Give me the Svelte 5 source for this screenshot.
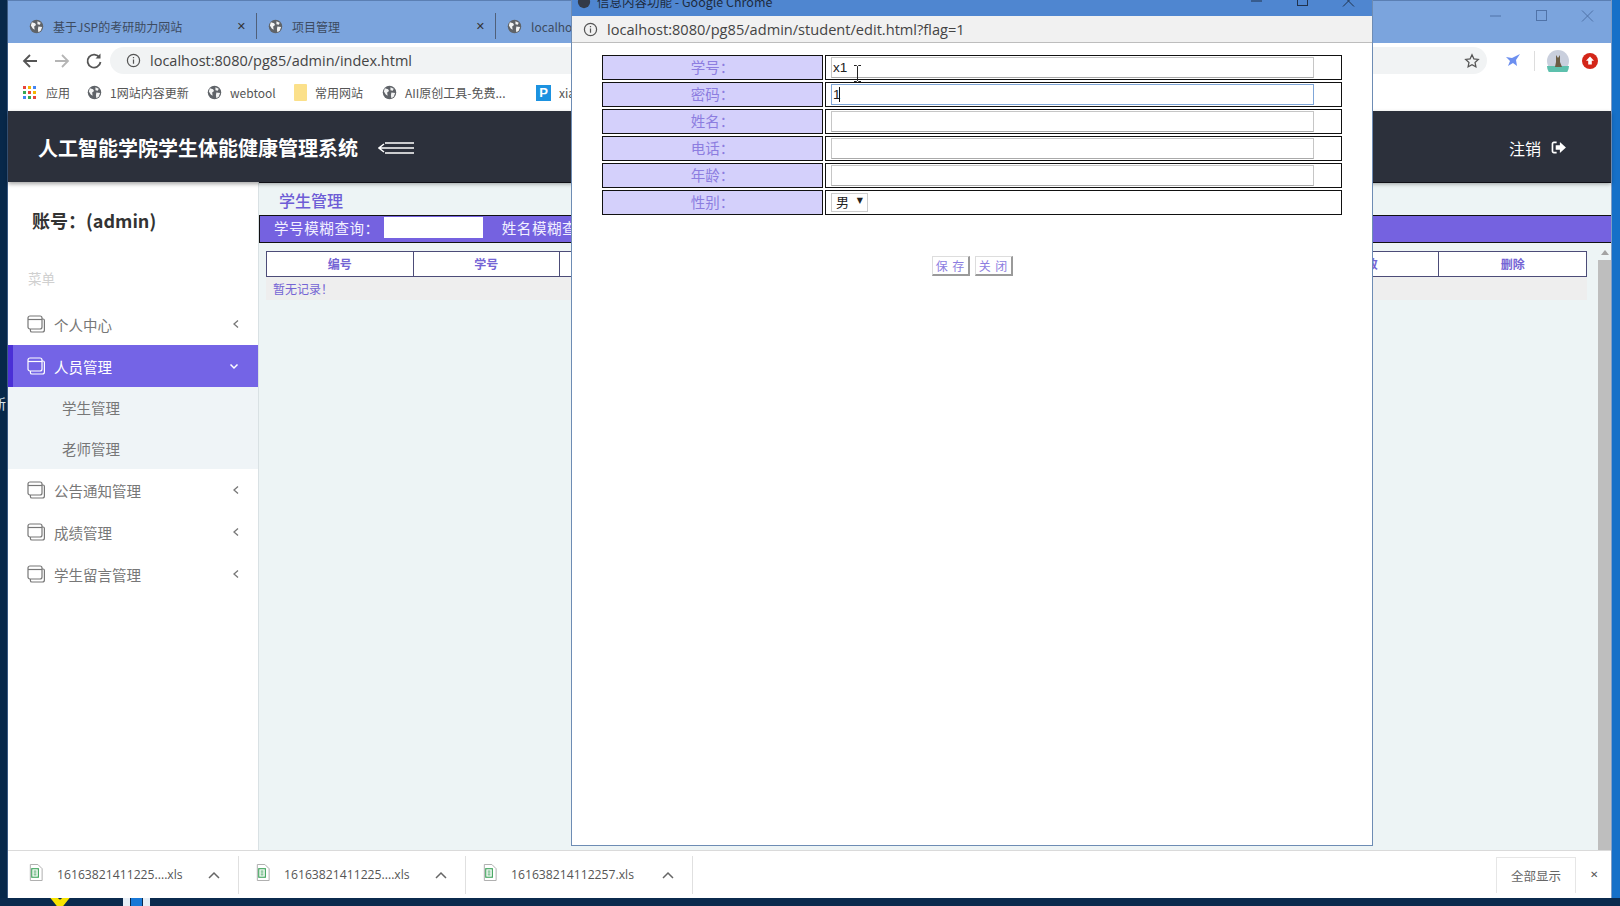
<script>
  const tabs = [
    { title: '基于JSP的考研助力网站', w: 228 },
    { title: '项目管理', w: 228 },
    { title: 'localhost', w: 120 }
  ];
  const marks = [
    { t: '1网站内容更新', k: 'globe', w: 120 },
    { t: 'webtool', k: 'globe', w: 87 },
    { t: '常用网站', k: 'folder', w: 88 },
    { t: 'AII原创工具-免费...', k: 'globe', w: 154 },
    { t: 'xiaohu', k: 'p', w: 60 }
  ];
  const menus = [
    { t: '个人中心' },
    { t: '人员管理', active: true },
    { t: '公告通知管理' },
    { t: '成绩管理' },
    { t: '学生留言管理' }
  ];
  const cols = ['编号', '学号', '密码', '姓名', '电话', '年龄', '性别', '修改', '删除'];
  const fields = [
    { l: '学号：', v: 'x1' },
    { l: '密码：', v: '1', focus: true },
    { l: '姓名：', v: '' },
    { l: '电话：', v: '' },
    { l: '年龄：', v: '' }
  ];
  const files = ['16163821411225....xls', '16163821411225....xls', '161638214112257.xls'];
  const dots = ['#e8453c','#f4b400','#4285f4','#34a853','#e8453c','#f4b400','#4285f4','#34a853','#e8453c'];
</script>

{#snippet globe()}
  <svg class="globe" viewBox="0 0 16 16"><circle cx="8" cy="8" r="7.2" fill="#5f6368"/><path d="M3 3.500l3.500 1 1 2-2 1.500.5 3.500-2-1.500L2 7zM9 2.500l3.500 1.500-1 2-2.500-.5zM10 8l4 .5-1.500 4-2.500 1.500-.5-3z" fill="#fff" opacity=".92"/></svg>
{/snippet}

{#snippet panels()}
  <svg class="panels" viewBox="0 0 18 18" fill="none" stroke="currentColor" stroke-width="1.2"><rect x="1" y="1" width="14" height="13" rx="2"/><path d="M1 4.500h14"/><path d="M15 4h1a1.400 1.400 0 0 1 1.400 1.400V15a2 2 0 0 1-2 2H5a1.600 1.600 0 0 1-1.600-1.600V14"/></svg>
{/snippet}

{#snippet winctl()}
  <svg viewBox="0 0 104 14" class="winctl" fill="none" stroke="currentColor" stroke-width="1"><path d="M0 7h11"/><rect x="46.500" y="1.500" width="10" height="10"/><path d="M92 1.500l11 11M103 1.500l-11 11"/></svg>
{/snippet}

<div class="desktop">
  <span class="sliver">新</span>
  <div class="chrome">
    <div class="tabs">
      {#each tabs as t, i}
        <div class="tab" style="width:{t.w}px">
          {@render globe()}
          <span class="tabt">{t.title}</span>
          {#if i < 2}<span class="tabx">✕</span>{/if}
        </div>
      {/each}
      <div class="ctl">{@render winctl()}</div>
    </div>

    <div class="toolbar">
      <svg class="nav" viewBox="0 0 18 18" fill="none" stroke="#555" stroke-width="1.8"><path d="M16 9H3M9 3L3 9l6 6"/></svg>
      <svg class="nav" viewBox="0 0 18 18" fill="none" stroke="#b5b5b5" stroke-width="1.8"><path d="M2 9h13M9 3l6 6-6 6"/></svg>
      <svg class="nav" viewBox="0 0 18 18" fill="none" stroke="#555" stroke-width="1.8"><path d="M14.500 5.500A6.500 6.500 0 1 0 15.500 10"/><path d="M15.500 1.500v5h-5" fill="#555" stroke="none"/></svg>
      <div class="omni">
        <svg class="info" viewBox="0 0 16 16" fill="none" stroke="#555" stroke-width="1.300"><circle cx="8" cy="8" r="6.500"/><path d="M8 7v4.500M8 4.300v1.400"/></svg>
        <span class="url">localhost:8080/pg85/admin/index.html</span>
        <svg class="star" viewBox="0 0 18 18" fill="none" stroke="#555" stroke-width="1.400"><path d="M9 2l2.100 4.600 5 .6-3.700 3.400 1 5L9 13.100 4.600 15.600l1-5L1.900 7.200l5-.6z"/></svg>
      </div>
      <svg class="bird" viewBox="0 0 18 18"><path d="M16 2L8 6 2 5l4 4-2 5 5-3 4 3-1-6z" fill="#6c8ff0"/></svg>
      <span class="tsep"></span>
      <span class="avatar"><svg viewBox="0 0 22 22"><circle cx="11" cy="11" r="11" fill="#c9cfdd"/><path d="M0 16h22a11 11 0 0 1-22 0z" fill="#5dc0ad"/><path d="M9 5l2 3 2-3v7l2 5H8l1-5z" fill="#6b5d45"/></svg></span>
      <span class="redb"><svg viewBox="0 0 16 16"><circle cx="8" cy="8" r="8" fill="#d32619"/><path d="M8 3.500l4 4.300H9.800v3.800H6.200V7.800H4z" fill="#fff"/></svg></span>
    </div>

    <div class="marks">
      <span class="mark apps">
        <span class="grid9">{#each dots as d}<i style="background:{d}"></i>{/each}</span>
        <span>应用</span>
      </span>
      {#each marks as m}
        <span class="mark" style="width:{m.w}px">
          {#if m.k === 'globe'}{@render globe()}
          {:else if m.k === 'folder'}<span class="fold"></span>
          {:else}<span class="pp">P</span>{/if}
          <span>{m.t}</span>
        </span>
      {/each}
    </div>

    <header class="head">
      <h1>人工智能学院学生体能健康管理系统</h1>
      <svg class="burger" viewBox="0 0 36 14" fill="none" stroke="#fff" stroke-width="1.500"><path d="M7 2h29M1 7h35M7 12h29M6 3L1 7l5 4"/></svg>
      <span class="logout">注销
        <svg viewBox="0 0 16 14"><path d="M6 1.500H3a1.500 1.500 0 0 0-1.500 1.500v8A1.500 1.500 0 0 0 3 12.500h3" fill="none" stroke="#fff" stroke-width="1.800"/><path d="M9.500 1L16 7l-6.500 6V9.500H5v-5h4.500z" fill="#fff"/></svg>
      </span>
    </header>

    <div class="page">
      <aside class="side">
        <div class="acct">账号：(admin)</div>
        <div class="cap">菜单</div>
        {#each menus as m}
          <div class="item" class:active={m.active}>
            {@render panels()}
            <span class="it">{m.t}</span>
            {#if m.active}
              <svg class="chev" viewBox="0 0 10 10" fill="none" stroke="#fff" stroke-width="1.500"><path d="M1.500 3.500L5 7l3.500-3.500"/></svg>
            {:else}
              <svg class="chev" viewBox="0 0 10 10" fill="none" stroke="#777" stroke-width="1.300"><path d="M7 1.500L3 5l4 3.500"/></svg>
            {/if}
          </div>
          {#if m.active}
            <div class="subs">
              <div class="sub">学生管理</div>
              <div class="sub">老师管理</div>
            </div>
          {/if}
        {/each}
      </aside>

      <main class="main">
        <div class="crumb">学生管理</div>
        <div class="search">
          <span>学号模糊查询：</span><input class="sinp" />
          <span class="s2">姓名模糊查询：</span><input class="sinp" />
        </div>
        <div class="scroll">
          <div class="tablewrap">
            <div class="thead">
              {#each cols as c}<div class="th">{c}</div>{/each}
            </div>
            <div class="empty">暂无记录！</div>
          </div>
          <div class="sbar"><span class="sup"></span><span class="thumb"></span></div>
        </div>
      </main>
    </div>

    <div class="downloads">
      {#each files as f}
        <div class="dl">
          <svg class="file" viewBox="0 0 14 18"><path d="M1 .5h8l4.500 4.500v12.500H1z" fill="#fff" stroke="#aaa"/><rect x="2.500" y="5" width="7" height="9" fill="#fff" stroke="#3da35a" stroke-width="1.200"/><path d="M4.500 7.500h3M4.500 9.500h3M4.500 11.500h3" stroke="#3da35a"/></svg>
          <span class="fname">{f}</span>
          <svg class="caret" viewBox="0 0 12 8" fill="none" stroke="#666" stroke-width="1.500"><path d="M1 7l5-5 5 5"/></svg>
        </div>
      {/each}
      <div class="grow"></div>
      <div class="showall">全部显示</div>
      <span class="dlx">✕</span>
    </div>
  </div>

  <div class="taskbar">
    <span class="ystar"></span>
    <span class="tile"><i></i><i class="b"></i><i></i></span>
  </div>

  <section class="popup">
    <div class="ptitle">
      <span class="pt"><svg class="pfav" viewBox="0 0 16 16"><circle cx="8" cy="8" r="7" fill="#333a47"/></svg>信息内容功能 - Google Chrome</span>
      <div class="ctl">{@render winctl()}</div>
    </div>
    <div class="paddr">
      <svg class="info" viewBox="0 0 16 16" fill="none" stroke="#555" stroke-width="1.300"><circle cx="8" cy="8" r="6.500"/><path d="M8 7v4.500M8 4.300v1.400"/></svg>
      <span>localhost:8080/pg85/admin/student/edit.html?flag=1</span>
    </div>
    <div class="pbody">
      <div class="form">
        {#each fields as f}
          <div class="lab">{f.l}</div>
          <div class="val">
            <span class="inpw">
              <input class="inp" class:focus={f.focus} value={f.v} />
              {#if f.focus}<span class="tcaret"></span>{/if}
            </span>
          </div>
        {/each}
        <div class="lab">性别：</div>
        <div class="val">
          <span class="selw"><select class="sel"><option>男</option><option>女</option></select></span>
        </div>
      </div>
      <div class="acts">
        <button class="btn">保 存</button>
        <button class="btn">关 闭</button>
      </div>
      <svg class="ibeam" viewBox="0 0 9 17" fill="none" stroke="#222" stroke-width="1"><path d="M1 .5h2.500l1 1 1-1H8M4.500 1.500v14M1 16.500h2.500l1-1 1 1H8"/></svg>
    </div>
  </section>
</div>

<style>
  :global(body) { margin: 0; }
  * { box-sizing: border-box; }
  .desktop {
    position: relative; width: 1620px; height: 906px; overflow: hidden;
    background: linear-gradient(90deg, #07284a 0, #07284a 8px, #1670c8 1612px);
    padding-left: 7px; padding-right: 8px;
    font-family: "Noto Sans CJK SC", "Noto Sans", sans-serif;
    display: flex; flex-direction: column;
  }
  .sliver { position: absolute; left: -8px; top: 393px; color: #dfe6ee; font-size: 14px; }
  .chrome { height: 898px; display: flex; flex-direction: column; background: #fff; border-left: 1px solid #3b5a82; border-right: 1px solid #7f9cc4; }
  .tabs { height: 43px; flex: none; background: #7ba4dd; border-top: 1px solid #5b7fb3; display: flex; align-items: center; padding: 8px 0 0 21px; position: relative; }
  .tab { display: flex; align-items: center; height: 26px; border-right: 1px solid #50607a; padding-right: 9px; margin-right: 11px; flex: none; }
  .tab:last-of-type { border-right: 0; }
  .tabt { margin-left: 9px; font-size: 12px; color: #3d4b60; flex: 1; white-space: nowrap; }
  .tabx { font-size: 11px; color: #333; font-weight: 700; font-family: "DejaVu Sans", sans-serif; margin-right: 1px; }
  .globe { width: 15px; height: 15px; flex: none; }
  .ctl { position: absolute; right: 17px; top: 8px; width: 104px; color: #5073a8; }
  .winctl { display: block; width: 104px; height: 14px; overflow: visible; }
  .toolbar { height: 35px; flex: none; display: flex; align-items: center; padding-left: 13px; background: #fff; }
  .nav { width: 18px; height: 18px; margin-right: 14px; flex: none; }
  .omni { width: 1377px; margin-right: 17px; height: 27px; border-radius: 14px; background: #f1f3f4; display: flex; align-items: center; padding: 0 7px 0 16px; margin-left: -7px; }
  .info { width: 15px; height: 15px; flex: none; }
  .url { margin-left: 9px; font-family: "Open Sans", sans-serif; font-size: 14.500px; color: #444; flex: 1; }
  .star { width: 16px; height: 16px; }
  .bird { width: 18px; height: 18px; flex: none; }
  .tsep { width: 1px; height: 20px; background: #ddd; margin: 0 12px; }
  .avatar, .redb { display: block; flex: none; }
  .avatar { width: 22px; height: 22px; }
  .avatar svg, .redb svg { display: block; width: 100%; height: 100%; }
  .redb { width: 16px; height: 16px; margin-left: 13px; }
  .marks { height: 33px; flex: none; display: flex; align-items: center; padding: 0 0 4px 15px; font-size: 12px; color: #555; background: #fff; }
  .mark { display: inline-flex; align-items: center; gap: 8px; white-space: nowrap; flex: none; overflow: hidden; }
  .apps { width: 64px; gap: 10px; }
  .grid9 { width: 13px; height: 13px; display: grid; grid-template-columns: repeat(3, 3px); gap: 2px; flex: none; }
  .grid9 i { display: block; width: 3px; height: 3px; }
  .fold { width: 13px; height: 17px; background: #fbe08a; display: block; flex: none; border-radius: 1px; }
  .pp { width: 15px; height: 16px; background: #1c92e0; color: #fff; font: 700 13px/16px "Liberation Sans", sans-serif; text-align: center; flex: none; }
  .head { height: 71px; flex: none; background: #2c303b; display: flex; align-items: center; padding: 2px 0 0 30px; box-shadow: 0 2px 4px rgba(0,0,0,.35); position: relative; z-index: 1; }
  h1 { margin: 0; color: #fff; font-size: 20px; font-weight: 700; line-height: 1; }
  .burger { width: 36px; height: 14px; margin-left: 20px; }
  .logout { margin-left: auto; margin-right: 45px; color: #fff; font-size: 16px; display: flex; align-items: center; gap: 10px; }
  .logout svg { width: 15px; height: 13px; }
  .page { flex: 1; display: flex; min-height: 0; }
  .side { width: 250px; flex: none; background: #fff; }
  .acct { margin: 24px 0 0 24px; height: 29px; font-size: 18px; font-weight: 700; color: #333; line-height: 29px; }
  .cap { margin: 33px 0 0 20px; font-size: 13.500px; line-height: 20px; color: #d0d0d0; height: 35px; }
  .item { height: 42px; display: flex; align-items: center; padding-left: 19px; color: #777; font-size: 14.500px; position: relative; }
  .item.active { background: #7464e6; color: #fff; border-left: 5px solid #4a30d6; padding-left: 14px; }
  .item.active .chev { margin-right: 19px; }
  .panels { width: 18px; height: 18px; flex: none; }
  .it { margin-left: 9px; flex: 1; }
  .chev { width: 10px; height: 10px; margin-right: 17px; }
  .subs { background: #eff4f7; height: 82px; }
  .sub { height: 41px; line-height: 41px; padding-left: 54px; color: #777; font-size: 14.500px; }
  .main { flex: 1; min-width: 0; background: #edf4f5; display: flex; flex-direction: column; border-left: 1px solid #d9e1e4; }
  .crumb { height: 33px; border-top: 1px solid #15151f; padding-left: 20px; line-height: 34px; color: #6d5dd6; font-size: 16px; font-weight: 500; flex: none; }
  .search { height: 28px; flex: none; background: #7562e0; border: 1px solid #111; border-right: 0; color: #f2f0ff; font-size: 14.500px; display: flex; align-items: center; padding: 0 0 4px 14px; letter-spacing: .6px; white-space: nowrap; }
  .sinp { width: 99px; height: 21px; border: 0; background: #fff; margin-left: 4px; }
  .s2 { margin-left: 19px; }
  .scroll { flex: 1; display: flex; min-height: 0; padding-left: 7px; }
  .tablewrap { width: 1321px; padding-top: 8px; }
  .thead { display: grid; grid-template-columns: repeat(9, 1fr); height: 26px; border: 1px solid #4c4c78; background: #fff; }
  .th { border-right: 1px solid #4c4c78; font-size: 12px; font-weight: 700; color: #7464d4; text-align: center; line-height: 24px; }
  .th:last-child { border-right: 0; }
  .empty { height: 23px; background: #eeeeee; font-size: 12px; color: #7464d4; padding-left: 7px; line-height: 23px; }
  .sbar { margin-left: 11px; width: 13px; display: flex; flex-direction: column; align-items: center; padding-top: 7px; }
  .sup { width: 0; height: 0; border: 4px solid transparent; border-bottom: 5px solid #a3a3a3; border-top: 0; }
  .thumb { width: 13px; flex: 1; background: #bebebe; margin-top: 5px; }
  .downloads { height: 48px; flex: none; background: #fff; border-top: 1px solid #dadada; display: flex; align-items: center; padding-left: 4px; }
  .dl { width: 227px; height: 38px; flex: none; border-right: 1px solid #e0e0e0; display: flex; align-items: center; padding-left: 17px; }
  .file { width: 14px; height: 17px; flex: none; margin-top: -4px; }
  .fname { margin-left: 14px; font-family: "Open Sans", sans-serif; font-size: 12.200px; color: #555; flex: 1; white-space: nowrap; }
  .caret { width: 12px; height: 8px; margin-right: 18px; flex: none; }
  .grow { flex: 1; }
  .showall { width: 80px; height: 36px; border: 1px solid #e6e6e6; border-bottom: 0; font-size: 12.500px; color: #666; text-align: center; line-height: 36px; }
  .dlx { margin: 0 9px 0 14px; font-size: 10px; color: #555; width: 12px; font-family: "DejaVu Sans", sans-serif; }
  .taskbar { height: 8px; display: flex; background: #0b2a4d; margin: 0 -8px 0 -7px; position: relative; overflow: hidden; }
  .ystar { width: 24px; height: 12px; margin: -3px 0 0 48px; background: #f7e300; clip-path: polygon(0 0, 25% 0, 50% 40%, 75% 0, 100% 0, 60% 100%, 40% 100%); }
  .tile { margin-left: 51px; display: flex; gap: 1px; height: 8px; }
  .tile i { width: 7px; background: #e6eef6; display: block; }
  .tile .b { width: 11px; background: #1878d6; }
  .popup { position: absolute; left: 571px; top: 0; width: 802px; height: 846px; background: #fff; border: 1px solid #6d8cb4; border-top: 0; display: flex; flex-direction: column; z-index: 5; }
  .ptitle { height: 16px; flex: none; background: #4f86d0; position: relative; overflow: hidden; }
  .pt { position: absolute; left: 5px; top: -7px; font-size: 12.500px; color: #1d2b40; display: flex; align-items: center; gap: 6px; white-space: nowrap; line-height: 18px; }
  .pfav { width: 14px; height: 14px; }
  .ptitle .ctl { top: -6px; right: 17px; color: #20324d; }
  .paddr { height: 27px; flex: none; background: #f1f1f1; border-bottom: 1px solid #bdbdbd; display: flex; align-items: center; padding-left: 11px; gap: 9px; font-family: "Open Sans", sans-serif; font-size: 14.600px; color: #444; }
  .pbody { flex: 1; position: relative; padding: 12px 30px 0 30px; }
  .form { display: grid; grid-template-columns: 221px 1fr; column-gap: 2px; row-gap: 2px; }
  .lab { height: 25px; background: #d4d0fb; border: 1px solid #111; color: #8c7de0; font-size: 14.500px; text-align: center; line-height: 21px; }
  .val { height: 25px; border: 1px solid #111; display: flex; align-items: center; padding-left: 5px; background: #fff; }
  .inpw { position: relative; display: block; width: 483px; height: 21px; }
  .inp { width: 100%; height: 100%; border: 1px solid #c6c6c6; border-bottom-color: #aaa; padding: 0 1px; font-family: "Liberation Sans", sans-serif; font-size: 13.500px; color: #222; background: #fff; outline: 0; display: block; }
  .inp.focus { border: 1px solid #7fa6d8; }
  .tcaret { position: absolute; left: 8px; top: 3px; width: 1px; height: 15px; background: #111; }
  .selw { position: relative; display: block; width: 37px; height: 19px; }
  .sel { width: 100%; height: 100%; appearance: none; border: 1px solid #ccc; background: #fff; font-family: "Liberation Sans", "Noto Sans CJK SC", sans-serif; font-size: 13px; color: #222; padding: 0 0 0 4px; border-radius: 0; outline: 0; display: block; }
  .selw::after { content: "▼"; position: absolute; right: 5px; top: 3px; font-size: 8px; line-height: 10px; color: #222; font-family: "DejaVu Sans", sans-serif; pointer-events: none; }
  .acts { display: flex; justify-content: center; gap: 5px; margin-top: 41px; }
  .btn { width: 38px; height: 20px; padding: 0; background: #fff; border: 1px solid #ddd; border-right: 2px solid #9a9a9a; border-bottom: 2px solid #9a9a9a; font-family: "Noto Sans CJK SC", sans-serif; font-size: 12px; word-spacing: 2px; color: #8c7de0; line-height: 16px; white-space: nowrap; overflow: hidden; }
  .ibeam { position: absolute; left: 281px; top: 22px; width: 9px; height: 17px; }
</style>
